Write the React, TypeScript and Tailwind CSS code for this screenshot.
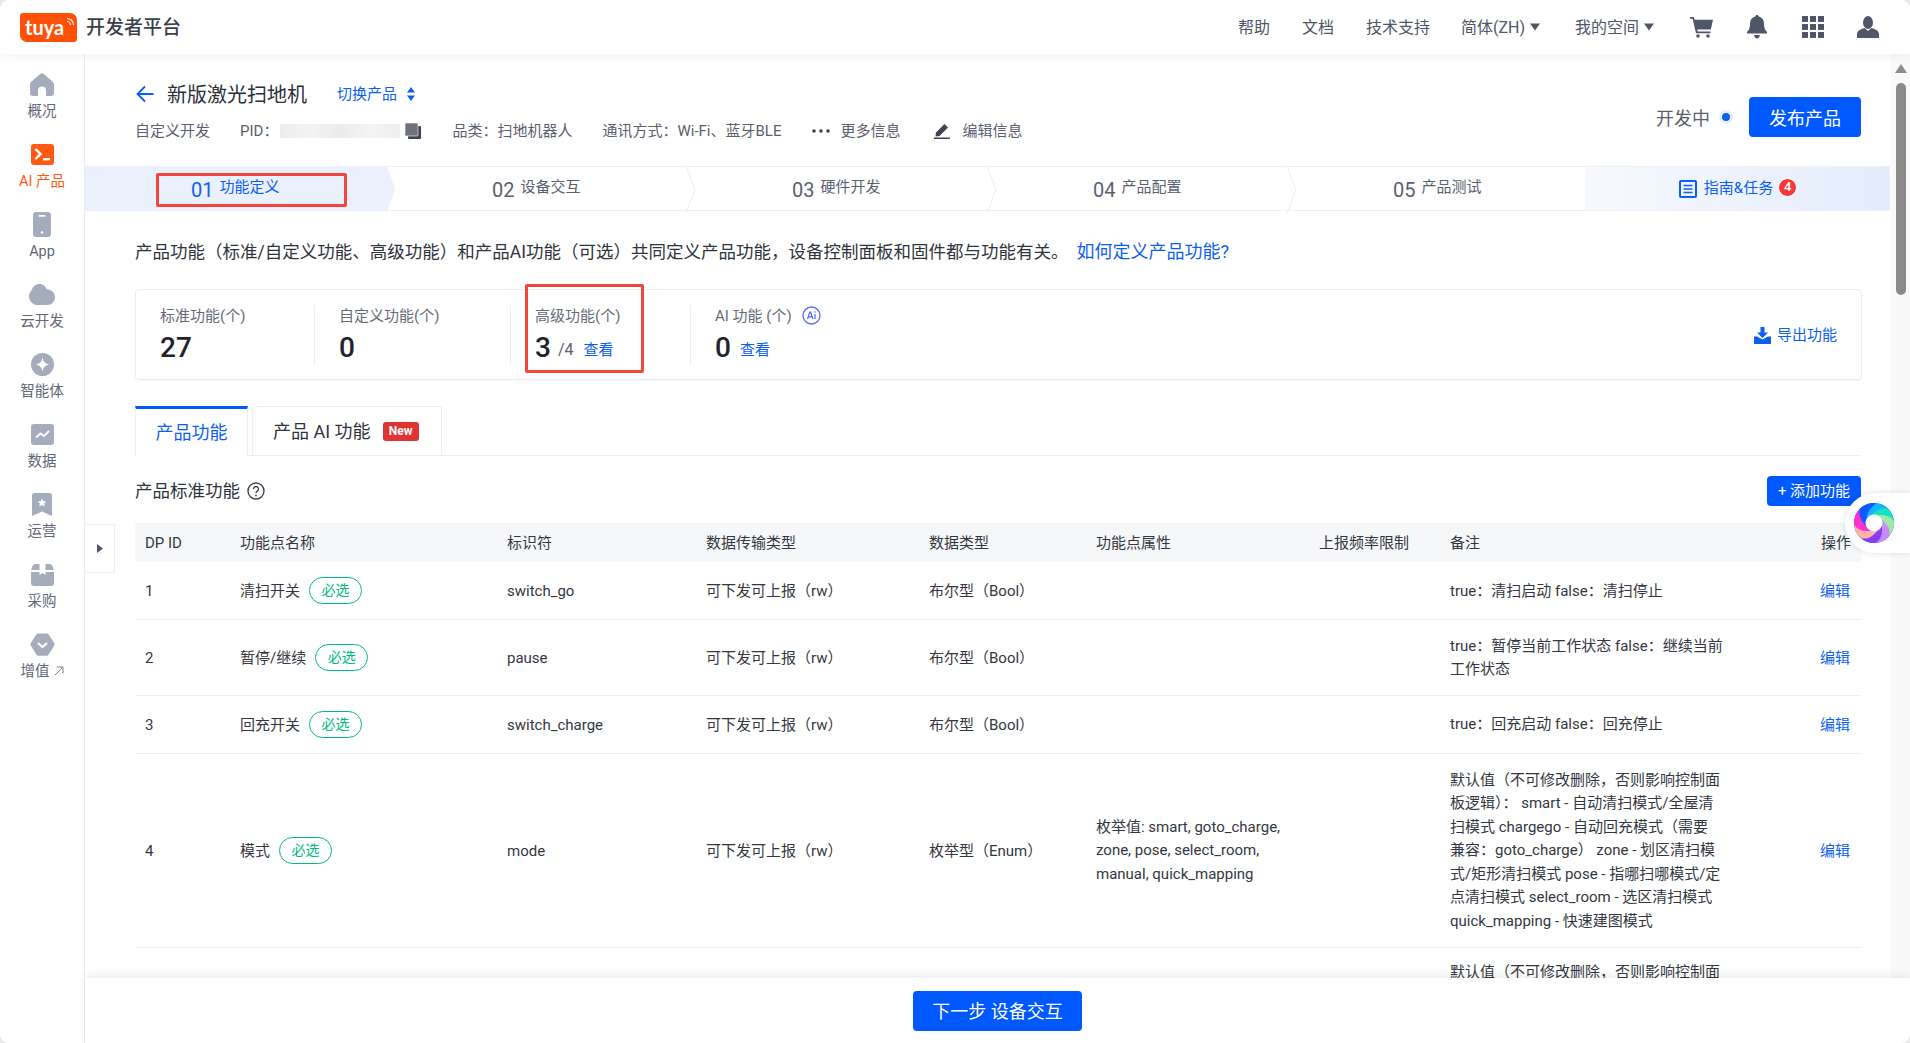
import React from "react";

const FONT = `Roboto, "Noto Sans CJK SC", sans-serif`;

function Caret() {
  return (
    <svg width="10" height="8" viewBox="0 0 10 8" className="-mt-[2px] ml-[5px]">
      <path d="M0 0.5H10L5 7.5Z" fill="#4f5668" />
    </svg>
  );
}

const I = "#a5acbc";

function HomeIcon() {
  return (
    <svg width="24" height="23" viewBox="0 0 24 23">
      <path d="M10.200 1a2.800 2.800 0 0 1 3.600 0l8.700 7.400c1 .9 1.500 1.900 1.500 3.100V20a3 3 0 0 1-3 3H16v-5.500a4 4 0 0 0-8 0V23H3a3 3 0 0 1-3-3v-8.500c0-1.200.5-2.200 1.500-3.100z" fill={I} />
    </svg>
  );
}
function AiIcon() {
  return (
    <svg width="23" height="21" viewBox="0 0 23 21">
      <rect width="23" height="21" rx="3" fill="#ff5a14" />
      <path d="M4.500 5l5 5-5 5" fill="none" stroke="#fff" strokeWidth="2.400" />
      <rect x="12" y="14" width="7" height="2.400" fill="#fff" />
    </svg>
  );
}
function PhoneIcon() {
  return (
    <svg width="18" height="25" viewBox="0 0 18 25">
      <rect width="18" height="25" rx="3.500" fill={I} />
      <rect x="5.500" y="3" width="7" height="1.800" rx=".9" fill="#fff" />
      <circle cx="9" cy="20.500" r="1.300" fill="#fff" />
    </svg>
  );
}
function CloudIcon() {
  return (
    <svg width="26" height="21" viewBox="0 0 26 21">
      <path d="M10.500 0c3.600 0 6.300 2.400 7.200 5.300C22.500 5.600 26 8.800 26 13c0 4.600-3.500 8-8 8H9C4 21 0 17.300 0 12.200 0 9.400 1.200 7.600 2.700 6.300 3.700 2.500 6.700 0 10.500 0z" fill={I} />
    </svg>
  );
}
function AgentIcon() {
  return (
    <svg width="23" height="23" viewBox="0 0 23 23">
      <circle cx="11.500" cy="11.500" r="11.500" fill={I} />
      <path d="M11.500 4.500c.6 4 2.700 6.300 6.800 7-4.100.7-6.200 3-6.800 7-.6-4-2.700-6.300-6.800-7 4.100-.7 6.200-3 6.800-7z" fill="#fff" />
    </svg>
  );
}
function ChartIcon() {
  return (
    <svg width="23" height="21" viewBox="0 0 23 21">
      <rect width="23" height="21" rx="3" fill={I} />
      <path d="M5 13.500l4.500-4 3.500 2.500 5-5" fill="none" stroke="#fff" strokeWidth="1.800" />
    </svg>
  );
}
function BookmarkIcon() {
  return (
    <svg width="20" height="23" viewBox="0 0 20 23">
      <path d="M2.500 0h15A2.500 2.500 0 0 1 20 2.500V23l-10-4.500L0 23V2.500A2.500 2.500 0 0 1 2.500 0z" fill={I} />
      <path d="M10 5.500l1.300 2.700 3 .4-2.200 2 .6 3-2.700-1.500-2.700 1.500.6-3-2.200-2 3-.4z" fill="#fff" />
    </svg>
  );
}
function BoxIcon() {
  return (
    <svg width="23" height="22" viewBox="0 0 23 22">
      <path d="M4.500 0H8.500V6H0.300C.8 2.500 2.200 0 4.500 0z M14.500 0H18.500C20.800 0 22.200 2.500 22.700 6H14.500z" fill={I} />
      <path d="M0 8H8.500V11L11.500 9 14.500 11V8H23V19a3 3 0 0 1-3 3H3a3 3 0 0 1-3-3z" fill={I} />
    </svg>
  );
}
function GemIcon() {
  return (
    <svg width="25" height="23" viewBox="0 0 25 23">
      <path d="M8 .5h9a2 2 0 0 1 1.500.7l5.500 8.500a3 3 0 0 1 0 3.300l-5.500 8.800a2 2 0 0 1-1.500 1H8a2 2 0 0 1-1.500-1L1 13a3 3 0 0 1 0-3.300L6.500 1.200A2 2 0 0 1 8 .5z" fill={I} />
      <path d="M8 10l4.500 4 4.500-4" fill="none" stroke="#fff" strokeWidth="2.200" />
    </svg>
  );
}

function Swirl() {
  const blades: [string, number][] = [
    ["#12b5ff", -75],
    ["#14e3c4", -25],
    ["#9fe8a8", 15],
    ["#c78bfa", 60],
    ["#8a3cf0", 105],
    ["#ffb3a5", 150],
    ["#ff2fd0", 195],
    ["#0c5cff", 245],
  ];
  return (
    <svg width="40" height="40" viewBox="-20 -20 40 40">
      <circle r="20" fill="#0c5cff" />
      {blades.map(([c, a]) => (
        <path key={a} transform={`rotate(${a})`} fill={c} d="M0 -8 Q12 -13 18.800 -6.800 A20 20 0 0 1 17.100 10.300 Q14 -2 6.200 -5 Z" />
      ))}
      <circle r="8.500" fill="#fff" />
    </svg>
  );
}

const navItems: { icon: React.ReactNode; label: React.ReactNode; active?: boolean }[] = [
  { icon: <HomeIcon />, label: "概况" },
  { icon: <AiIcon />, label: "AI 产品", active: true },
  { icon: <PhoneIcon />, label: "App" },
  { icon: <CloudIcon />, label: "云开发" },
  { icon: <AgentIcon />, label: "智能体" },
  { icon: <ChartIcon />, label: "数据" },
  { icon: <BookmarkIcon />, label: "运营" },
  { icon: <BoxIcon />, label: "采购" },
  {
    icon: <GemIcon />,
    label: (
      <span className="flex items-center">
        增值
        <svg width="10" height="10" viewBox="0 0 10 10" className="ml-[4px] -mt-[3px]">
          <path d="M1 9L9 1M2.500 1H9V7.500" fill="none" stroke="#7b8292" strokeWidth="1" />
        </svg>
      </span>
    ),
  },
];

function Badge() {
  return (
    <span className="ml-[9px] inline-flex h-[27px] w-[53px] items-center justify-center rounded-[14px] border border-[#00b980] text-[14px] text-[#00b980]">
      必选
    </span>
  );
}

type Row = { id: string; h: string; name?: string; ident?: string; trans?: string; type?: string; prop?: string[]; note: string[] };

const rows: Row[] = [
  { id: "1", h: "h-[57px]", name: "清扫开关", ident: "switch_go", trans: "可下发可上报（rw）", type: "布尔型（Bool）", note: ["true：清扫启动 false：清扫停止"] },
  { id: "2", h: "h-[76px]", name: "暂停/继续", ident: "pause", trans: "可下发可上报（rw）", type: "布尔型（Bool）", note: ["true：暂停当前工作状态 false：继续当前", "工作状态"] },
  { id: "3", h: "h-[58px]", name: "回充开关", ident: "switch_charge", trans: "可下发可上报（rw）", type: "布尔型（Bool）", note: ["true：回充启动 false：回充停止"] },
  {
    id: "4",
    h: "h-[194px]",
    name: "模式",
    ident: "mode",
    trans: "可下发可上报（rw）",
    type: "枚举型（Enum）",
    prop: ["枚举值: smart, goto_charge,", "zone, pose, select_room,", "manual, quick_mapping"],
    note: [
      "默认值（不可修改删除，否则影响控制面",
      "板逻辑）： smart - 自动清扫模式/全屋清",
      "扫模式 chargego - 自动回充模式（需要",
      "兼容：goto_charge） zone - 划区清扫模",
      "式/矩形清扫模式 pose - 指哪扫哪模式/定",
      "点清扫模式 select_room - 选区清扫模式",
      "quick_mapping - 快速建图模式",
    ],
  },
  { id: "", h: "h-[76px]", note: ["默认值（不可修改删除，否则影响控制面"] },
];

const heads = ["DP ID", "功能点名称", "标识符", "数据传输类型", "数据类型", "功能点属性", "上报频率限制", "备注", "操作"];

const steps = [
  ["01", "功能定义"],
  ["02", "设备交互"],
  ["03", "硬件开发"],
  ["04", "产品配置"],
  ["05", "产品测试"],
];

function Stat({ width, label, value, children, last }: { width: string; label: React.ReactNode; value: string; children?: React.ReactNode; last?: boolean }) {
  return (
    <div className={`${width} h-[60px] pl-[24px] ${last ? "" : "border-r border-[#eeeff2]"}`}>
      <div className="flex h-[22px] items-center text-[15px] leading-[22px] text-[#666b78]">{label}</div>
      <div className="mt-[3px] flex items-center">
        <span className="text-[28px] font-medium leading-[36px] text-[#1f232c]">{value}</span>
        {children}
      </div>
    </div>
  );
}

export default function App() {
  return (
    <div className="h-[1043px] w-[1910px] overflow-hidden bg-[#e8e8e8]" style={{ fontFamily: FONT }}>
      <div className="flex h-full w-full flex-col overflow-hidden rounded-[9px] bg-white">
        {/* top bar */}
        <header className="relative z-20 flex h-[54px] shrink-0 items-center justify-between bg-white pl-[20px] pr-[31px] shadow-[0_2px_10px_rgba(0,0,0,0.05)]">
          <div className="flex items-center">
            <div className="relative flex h-[29px] w-[57px] items-center rounded-[3px] rounded-bl-[7px] rounded-tr-[7px] bg-[#ff5005] pl-[5px]">
              <span className="text-[20px] font-bold leading-none text-white" style={{ fontFamily: "Lato, sans-serif" }}>tuya</span>
              <svg width="9" height="9" viewBox="0 0 9 9" className="absolute right-[2px] top-[4px]">
                <path d="M1 4.500A3.500 3.500 0 0 1 4.500 8M1 1.500A6.500 6.500 0 0 1 7.500 8" fill="none" stroke="#fff" strokeWidth="1.100" />
              </svg>
            </div>
            <span className="ml-[9px] pt-[3px] text-[19px] font-medium text-[#3a3f4b]">开发者平台</span>
          </div>
          <div className="flex items-center text-[16px] text-[#4f5668]">
            <span className="pt-[2px]">帮助</span>
            <span className="ml-[32px] pt-[2px]">文档</span>
            <span className="ml-[32px] pt-[2px]">技术支持</span>
            <span className="ml-[31px] flex items-center pt-[2px]">简体(ZH)<Caret /></span>
            <span className="ml-[35px] flex items-center pt-[2px]">我的空间<Caret /></span>
            <svg width="23" height="22" viewBox="0 0 23 22" className="ml-[36px]">
              <path d="M0 1h3.800l.8 2.800H23l-2.200 9.700H7.200l.5 2H20.500v1.800H6L2.600 2.800H0z" fill="#4f5668" />
              <circle cx="8" cy="20" r="1.800" fill="#4f5668" />
              <circle cx="18" cy="20" r="1.800" fill="#4f5668" />
            </svg>
            <svg width="20" height="24" viewBox="0 0 20 24" className="ml-[34px]">
              <path d="M10 0c1 0 1.600.6 1.800 1.500C15 2.300 17 5 17 8.500c0 4.500 1 6.500 3 8.500v1.500H0V17c2-2 3-4 3-8.500C3 5 5 2.300 8.200 1.500 8.400.6 9 0 10 0z" fill="#4f5668" />
              <path d="M7 20h6c-.5 2.500-1.700 3.500-3 3.500S7.500 22.500 7 20z" fill="#4f5668" />
            </svg>
            <svg width="22" height="22" viewBox="0 0 22 22" className="ml-[35px]" fill="#4f5668">
              <rect width="6" height="6" /><rect x="8" width="6" height="6" /><rect x="16" width="6" height="6" />
              <rect y="8" width="6" height="6" /><rect x="8" y="8" width="6" height="6" /><rect x="16" y="8" width="6" height="6" />
              <rect y="16" width="6" height="6" /><rect x="8" y="16" width="6" height="6" /><rect x="16" y="16" width="6" height="6" />
            </svg>
            <svg width="22" height="22" viewBox="0 0 22 22" className="ml-[33px]">
              <ellipse cx="11" cy="6.500" rx="5" ry="6.500" fill="#4f5668" />
              <path d="M7.500 12L11 15l3.500-3c4 1.500 7.500 2.800 7.500 6v4H0v-4c0-3.200 3.500-4.500 7.500-6z" fill="#4f5668" />
            </svg>
          </div>
        </header>

        <div className="flex min-h-0 flex-1">
          {/* side bar */}
          <aside className="relative z-10 w-[85px] shrink-0 border-r border-[#e9edf7] bg-white pt-[19px]">
            {navItems.map((n, i) => (
              <div key={i} className="flex h-[70px] flex-col items-center">
                <div className="flex h-[23px] items-center justify-center">{n.icon}</div>
                <div className={`mt-[6px] text-[14.500px] leading-[20px] ${n.active ? "text-[#ff5a14]" : "text-[#5f6778]"}`}>{n.label}</div>
              </div>
            ))}
          </aside>

          {/* main */}
          <div className="relative flex min-w-0 flex-1 flex-col">
            <div className="absolute left-0 top-[470px] z-10 flex h-[49px] w-[30px] items-center justify-center border-y border-r border-[#eceef2] bg-white">
              <svg width="6" height="9" viewBox="0 0 6 9"><path d="M0 0L6 4.500 0 9z" fill="#4f5668" /></svg>
            </div>

            <div className="flex min-h-0 flex-1">
              <div className="min-w-0 flex-1 overflow-hidden">
                {/* product head */}
                <div className="flex h-[112px] justify-between pl-[50px] pr-[30px]">
                  <div className="pt-[28px]">
                    <div className="flex h-[24px] items-center">
                      <svg width="18" height="18" viewBox="0 0 18 18" className="ml-[1px]">
                        <path d="M17.500 9H2M9 1.500L1.500 9 9 16.500" fill="none" stroke="#0d5ff0" strokeWidth="1.800" />
                      </svg>
                      <span className="ml-[13px] pt-[2px] text-[20px] leading-[24px] text-[#2b2f3a]">新版激光扫地机</span>
                      <span className="ml-[30px] pt-[1px] text-[15px] text-[#0d5ff0]">切换产品</span>
                      <svg width="8" height="14" viewBox="0 0 8 14" className="ml-[10px]">
                        <path d="M4 0l4 5.500H0zM4 14L0 8.500h8z" fill="#0d5ff0" />
                      </svg>
                    </div>
                    <div className="mt-[13px] flex h-[24px] items-center text-[15px] text-[#5a6070]">
                      <span>自定义开发</span>
                      <span className="ml-[30px]">PID：</span>
                      <span className="ml-[2px] h-[14px] w-[120px] bg-[linear-gradient(90deg,#ececec,#f3f3f3,#ebebeb,#f4f4f4,#ededed)]" />
                      <svg width="16" height="16" viewBox="0 0 16 16" className="ml-[5px]">
                        <rect x="3" y="3" width="13" height="13" rx="1" fill="#3f4450" />
                        <rect x="0" y="0" width="13" height="13" rx="1" fill="#6d717b" stroke="#fff" strokeWidth=".6" />
                      </svg>
                      <span className="ml-[31px]">品类：扫地机器人</span>
                      <span className="ml-[30px]">通讯方式：Wi-Fi、蓝牙BLE</span>
                      <svg width="18" height="4" viewBox="0 0 18 4" className="ml-[31px]" fill="#3f4450">
                        <circle cx="2" cy="2" r="1.800" /><circle cx="9" cy="2" r="1.800" /><circle cx="16" cy="2" r="1.800" />
                      </svg>
                      <span className="ml-[10px]">更多信息</span>
                      <svg width="16" height="16" viewBox="0 0 16 16" className="ml-[34px]">
                        <path d="M10.500 1l3.500 3.500L5.500 13 1.500 13.500 2 9.500z" fill="#3f4450" />
                        <rect x="0" y="14.500" width="16" height="1.500" fill="#3f4450" />
                      </svg>
                      <span className="ml-[12px]">编辑信息</span>
                    </div>
                  </div>
                  <div className="flex items-start pt-[43px]">
                    <span className="mt-[2px] text-[18px] leading-[40px] text-[#5a5f6b]">开发中</span>
                    <span className="ml-[9px] mt-[13px] flex h-[14px] w-[14px] items-center justify-center rounded-full bg-[#e6f0fd]">
                      <span className="h-[8px] w-[8px] rounded-full bg-[#0d5ff0]" />
                    </span>
                    <button className="ml-[16px] h-[40px] w-[112px] rounded-[4px] bg-[#0058ff] pt-[2px] text-[18px] text-white">发布产品</button>
                  </div>
                </div>

                {/* steps */}
                <div className="relative flex h-[45px] border-y border-[#eef0f5]">
                  <div className="absolute -top-px left-0 h-[45px] w-[310px] bg-[#eaf1fd] [clip-path:polygon(0_0,301px_0,310px_50%,301px_100%,0_100%)]" />
                  {steps.map(([num, label], i) => (
                    <div key={num} className={`relative flex h-full items-center pl-[106px] pt-[2px] ${i === 0 ? "w-[301px]" : i === 2 ? "w-[301px]" : i === 4 ? "w-[298px]" : "w-[300px]"}`}>
                      <span className={`text-[20px] leading-none ${i === 0 ? "text-[#0d5ff0]" : "text-[#5a6070]"}`}>{num}</span>
                      <span className={`-mt-[4px] ml-[6px] text-[15px] leading-none ${i === 0 ? "text-[#0d5ff0]" : "text-[#5a6070]"}`}>{label}</span>
                      {i < 4 && (
                        <svg width="10" height="47" viewBox="0 0 10 47" className="absolute -right-[10px] -top-px" fill="none">
                          <path d="M0 0L9 23.500 0 47" stroke={i === 0 ? "#eaf1fd" : "#e9ecf3"} strokeWidth="1" />
                        </svg>
                      )}
                    </div>
                  ))}
                  <div className="relative flex h-full w-[305px] items-center justify-center bg-[linear-gradient(90deg,#f7f9fe,#e3ecfb)] pl-[1px]">
                    <svg width="18" height="18" viewBox="0 0 18 18">
                      <rect x="1" y="1" width="16" height="16" rx="1" fill="none" stroke="#0d5ff0" strokeWidth="2" />
                      <path d="M4.500 5.500h9M4.500 9h9M4.500 12.500h9" stroke="#0d5ff0" strokeWidth="1.700" />
                    </svg>
                    <span className="ml-[7px] text-[15px] text-[#0d5ff0]">指南&任务</span>
                    <span className="mb-[3px] ml-[5px] flex h-[19px] w-[19px] items-center justify-center rounded-full border border-white bg-[#f5383c] text-[13px] font-medium text-white">4</span>
                  </div>
                  <div className="absolute left-[71px] top-[6px] h-[34px] w-[191px] rounded-[2px] border-[3px] border-[#f0483e]" />
                </div>

                <div className="pl-[50px] pr-[30px]">
                  <p className="mt-[30px] h-[22px] whitespace-nowrap text-[17.500px] leading-[22px] text-[#2f333d]">
                    产品功能（标准/自定义功能、高级功能）和产品AI功能（可选）共同定义产品功能，设备控制面板和固件都与功能有关。
                    <span className="ml-[8px] text-[18px] text-[#0d5ff0]">如何定义产品功能?</span>
                  </p>

                  {/* stats */}
                  <div className="relative mt-[26px] flex h-[91px] w-[1727px] items-center rounded-[4px] border border-[#eaecf0] shadow-[0_1px_1px_rgba(0,0,0,0.04)]">
                    <Stat width="w-[179px]" label="标准功能(个)" value="27" />
                    <Stat width="w-[196px]" label="自定义功能(个)" value="0" />
                    <Stat width="w-[180px]" label="高级功能(个)" value="3">
                      <span className="ml-[7px] mt-[5px] text-[16px] text-[#5a6070]">/4</span>
                      <span className="ml-[10px] mt-[5px] text-[15px] text-[#0d5ff0]">查看</span>
                    </Stat>
                    <Stat
                      width="w-[500px]"
                      last
                      label={
                        <>
                          AI 功能 (个)
                          <svg width="19" height="19" viewBox="0 0 19 19" className="ml-[10px]">
                            <circle cx="9.500" cy="9.500" r="8.500" fill="none" stroke="#4f6cf5" strokeWidth="1.300" />
                            <path d="M5.500 13l2.300-7h.8l2.300 7M6.500 10.800h3.500M13 8v5" fill="none" stroke="#4f6cf5" strokeWidth="1.200" />
                            <circle cx="13" cy="6" r=".8" fill="#4f6cf5" />
                          </svg>
                        </>
                      }
                      value="0"
                    >
                      <span className="ml-[9px] mt-[5px] text-[15px] text-[#0d5ff0]">查看</span>
                    </Stat>
                    <div className="ml-auto mr-[24px] mt-[2px] flex items-center text-[15px] text-[#0d5ff0]">
                      <svg width="17" height="17" viewBox="0 0 17 17" fill="#0d5ff0">
                        <path d="M6.500 0h4v5.500H14l-5.500 5.500L3 5.500h3.500z" />
                        <path d="M0 9.500h3l5.500 3 5.500-3h3V17H0z" />
                      </svg>
                      <span className="ml-[6px]">导出功能</span>
                    </div>
                    <div className="absolute left-[389px] top-[-6px] h-[89px] w-[119px] rounded-[2px] border-[3px] border-[#f0483e]" />
                  </div>

                  {/* tabs */}
                  <div className="mt-[26px] flex h-[50px] border-b border-[#eceef2]">
                    <div className="flex h-[50px] w-[113px] items-center justify-center border-x border-t-[3px] border-x-[#eceef2] border-t-[#0058ff] bg-white text-[18px] text-[#0d5ff0]">产品功能</div>
                    <div className="ml-[4px] flex h-[49px] w-[190px] items-center rounded-t-[4px] border-x border-t border-[#eceef2] pl-[20px] text-[18px] text-[#2f333d]">
                      产品 AI 功能
                      <span className="ml-[12px] flex h-[19px] w-[36px] items-center justify-center rounded-[3px] bg-[#e23333] text-[12px] font-bold text-white">New</span>
                    </div>
                  </div>

                  {/* section title */}
                  <div className="mt-[20px] flex h-[30px] items-center justify-between">
                    <div className="flex items-center text-[17.500px] text-[#2f333d]">
                      产品标准功能
                      <svg width="18" height="18" viewBox="0 0 18 18" className="ml-[7px]">
                        <circle cx="9" cy="9" r="8" fill="none" stroke="#3f4450" strokeWidth="1.400" />
                        <path d="M6.500 7a2.500 2.500 0 1 1 3.800 2.100c-.9.6-1.300 1-1.300 2" fill="none" stroke="#3f4450" strokeWidth="1.400" />
                        <circle cx="9" cy="13.500" r=".9" fill="#3f4450" />
                      </svg>
                    </div>
                    <button className="h-[30px] w-[94px] rounded-[4px] bg-[#0058ff] text-[15px] text-white">+ 添加功能</button>
                  </div>

                  {/* table */}
                  <table className="mt-[17px] w-[1726px] table-fixed border-collapse text-[15px] text-[#333742]">
                    <colgroup>
                      <col className="w-[95px]" />
                      <col className="w-[267px]" />
                      <col className="w-[199px]" />
                      <col className="w-[223px]" />
                      <col className="w-[167px]" />
                      <col className="w-[223px]" />
                      <col className="w-[131px]" />
                      <col className="w-[371px]" />
                      <col className="w-[50px]" />
                    </colgroup>
                    <thead>
                      <tr className="h-[39px] bg-[#f6f7f9]">
                        {heads.map((h) => (
                          <th key={h} className="whitespace-nowrap pl-[10px] pt-[2px] text-left font-normal">{h}</th>
                        ))}
                      </tr>
                    </thead>
                    <tbody>
                      {rows.map((r, i) => (
                        <tr key={i} className={`${r.h} border-b border-[#eceef2]`}>
                          <td className="pl-[10px] pt-[2px]">{r.id}</td>
                          <td className="pl-[10px]">
                            {r.name && (
                              <span className="flex items-center">
                                <span className="pt-[2px]">{r.name}</span>
                                <Badge />
                              </span>
                            )}
                          </td>
                          <td className="pl-[10px] pt-[2px]">{r.ident}</td>
                          <td className="whitespace-nowrap pl-[10px] pt-[2px]">{r.trans}</td>
                          <td className="whitespace-nowrap pl-[10px] pt-[2px]">{r.type}</td>
                          <td className="whitespace-nowrap pl-[10px] pt-[2px] leading-[23.500px]">
                            {r.prop?.map((l) => <div key={l}>{l}</div>)}
                          </td>
                          <td />
                          <td className={`whitespace-nowrap pl-[10px] leading-[23.500px] ${r.name ? "pt-[2px]" : "align-top pt-[13px]"}`}>
                            {r.note.map((l) => <div key={l}>{l}</div>)}
                          </td>
                          <td className="whitespace-nowrap pl-[9px] pt-[2px] text-[#0d5ff0]">{r.name ? "编辑" : ""}</td>
                        </tr>
                      ))}
                    </tbody>
                  </table>
                </div>
              </div>

              {/* scrollbar */}
              <div className="flex w-[19px] shrink-0 flex-col items-center bg-[#f9f9f9] pt-[10px]">
                <svg width="12" height="9" viewBox="0 0 12 9"><path d="M6 0l6 9H0z" fill="#8c8c8c" /></svg>
                <div className="mt-[10px] h-[212px] w-[10px] rounded-[5px] bg-[#8a8a8a]" />
              </div>
            </div>

            {/* footer */}
            <footer className="relative z-10 flex h-[65px] shrink-0 items-center justify-center bg-white shadow-[0_-3px_8px_rgba(0,0,0,0.07)]">
              <button className="h-[40px] w-[169px] rounded-[4px] bg-[#0058ff] pt-[2px] text-[18px] text-white">下一步 设备交互</button>
            </footer>

            {/* floating assistant */}
            <div className="absolute right-0 top-[439px] z-10 flex h-[60px] w-[65px] items-center rounded-l-[30px] bg-white pl-[9px] shadow-[0_0_6px_rgba(0,0,0,0.12)]">
              <Swirl />
            </div>
          </div>
        </div>
      </div>
    </div>
  );
}
